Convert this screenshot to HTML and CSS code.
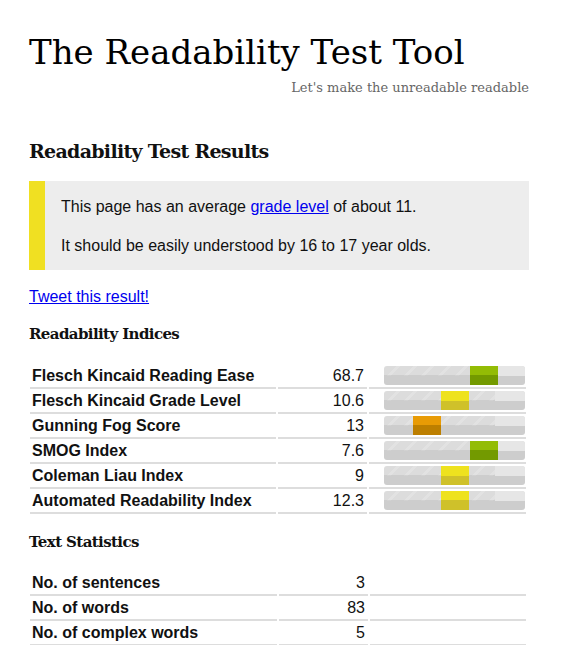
FILE: index.html
```html
<!DOCTYPE html>
<html>
<head>
<meta charset="utf-8">
<link rel="stylesheet" href="styles.css">
</head>
<body>
<div class="page">
  <header class="masthead">
    <h1 class="title">The Readability Test Tool</h1>
    <p class="tagline">Let's make the unreadable readable</p>
  </header>

  <h2 class="section-title">Readability Test Results</h2>

  <div class="summary">
    <p>This page has an average <a href="#">grade level</a> of about 11.</p>
    <p>It should be easily understood by 16 to 17 year olds.</p>
  </div>

  <p class="tweet"><a href="#">Tweet this result!</a></p>

  <h3 class="sub-title">Readability Indices</h3>
  <table class="stats">
    <tr><th>Flesch Kincaid Reading Ease</th><td class="num">68.7</td><td class="meter"><div class="bar"><span class="seg green s3"></span></div></td></tr>
    <tr><th>Flesch Kincaid Grade Level</th><td class="num">10.6</td><td class="meter"><div class="bar"><span class="seg yellow s2"></span></div></td></tr>
    <tr><th>Gunning Fog Score</th><td class="num">13</td><td class="meter"><div class="bar"><span class="seg orange s1"></span></div></td></tr>
    <tr><th>SMOG Index</th><td class="num">7.6</td><td class="meter"><div class="bar"><span class="seg green s3"></span></div></td></tr>
    <tr><th>Coleman Liau Index</th><td class="num">9</td><td class="meter"><div class="bar"><span class="seg yellow s2"></span></div></td></tr>
    <tr><th>Automated Readability Index</th><td class="num">12.3</td><td class="meter"><div class="bar"><span class="seg yellow s2"></span></div></td></tr>
  </table>

  <h3 class="sub-title">Text Statistics</h3>
  <table class="stats stats-plain">
    <tr><th>No. of sentences</th><td class="num">3</td><td class="meter"></td></tr>
    <tr><th>No. of words</th><td class="num">83</td><td class="meter"></td></tr>
    <tr><th>No. of complex words</th><td class="num">5</td><td class="meter"></td></tr>
  </table>
</div>
</body>
</html>
```

FILE: styles.css
```css
html, body {
  margin: 0;
  padding: 0;
  background: #fff;
}
body {
  font-family: "Liberation Sans", Arial, sans-serif;
  color: #111;
}
.page {
  width: 500px;
  margin-left: 29px;
  padding-top: 30px;
}
.masthead {
  display: flex;
  flex-direction: column;
}
.title {
  font-family: "DejaVu Serif", serif;
  font-weight: normal;
  font-size: 34px;
  line-height: 44px;
  margin: 0;
  color: #000;
}
.tagline {
  font-family: "DejaVu Serif", serif;
  font-size: 13px;
  color: #666;
  margin: 5px 0 0;
  line-height: 18px;
  text-align: right;
}
.section-title {
  font-family: "DejaVu Serif", serif;
  font-weight: bold;
  font-size: 19px;
  letter-spacing: -0.7px;
  line-height: 24px;
  margin: 42px 0 0;
}
.summary {
  margin-top: 18px;
  background: #ededed;
  border-left: 16px solid #f0e022;
  padding: 17px 16px 15px;
  font-size: 16px;
  line-height: 18px;
}
.summary p {
  margin: 0;
}
.summary p + p {
  margin-top: 21px;
}
.summary a, .tweet a {
  color: #0000ee;
}
.tweet {
  font-size: 16px;
  line-height: 18px;
  margin: 18px 0 0;
}
.sub-title {
  font-family: "DejaVu Serif", serif;
  font-weight: bold;
  font-size: 15px;
  letter-spacing: -0.6px;
  line-height: 20px;
  margin: 18px 0 0;
}
.stats {
  width: 500px;
  margin-top: 20px;
  border-collapse: separate;
  border-spacing: 2px 0;
  margin-left: -1px;
  font-size: 16px;
}
.stats-plain {
  margin-top: 19px;
}
.stats th, .stats td {
  border-bottom: 2px solid #dddddd;
  height: 23px;
  padding: 0;
  vertical-align: middle;
}
.stats th {
  text-align: left;
  font-weight: bold;
  padding-left: 2px;
  width: 245px;
}
.stats td.num {
  text-align: right;
  padding-right: 3px;
  width: 86px;
}
.stats td.meter {
  padding-left: 15px;
  padding-right: 1px;
}
.bar {
  position: relative;
  height: 19px;
  width: 141px;
  border-radius: 3px;
  overflow: hidden;
  background:
    repeating-linear-gradient(135deg, rgba(255,255,255,0) 0 9px, rgba(255,255,255,0.18) 9px 12px) top/100% 50% no-repeat,
    linear-gradient(to bottom, #dcdcdc 0 50%, #cdcdcd 50% 100%);
}
.bar::after {
  content: "";
  position: absolute;
  right: 0;
  top: 0;
  width: 30px;
  height: 50%;
  background: #e6e6e6;
}
.seg {
  position: absolute;
  top: 0;
  bottom: 0;
  width: 28px;
  z-index: 1;
}
.s1 { left: 29px; }
.s2 { left: 57px; }
.s3 { left: 86px; }
.green { background: linear-gradient(to bottom, #93bc05 0 50%, #739a00 50% 100%); }
.yellow { background: linear-gradient(to bottom, #eee21e 0 50%, #cfc12a 50% 100%); }
.orange { background: linear-gradient(to bottom, #e89b05 0 50%, #bd7f00 50% 100%); }
```
